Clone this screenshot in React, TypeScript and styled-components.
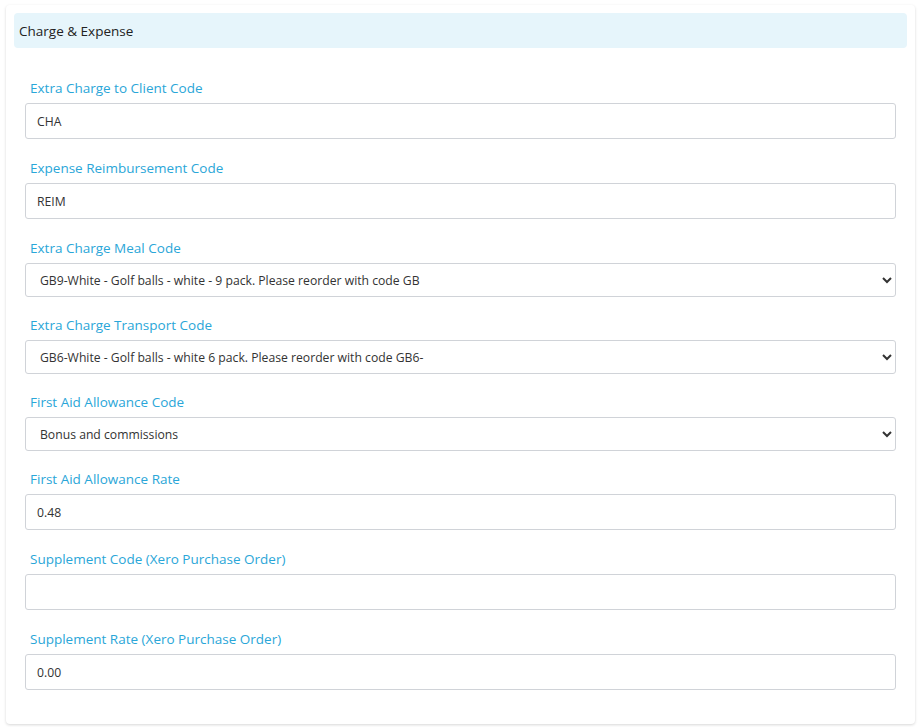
import React from "react";
import styled, {createGlobalStyle} from "styled-components";

const GlobalStyle = createGlobalStyle`
  html, body {
    margin: 0;
    padding: 0;
    background: #fff;
    font-family: "Open Sans", "Noto Sans", sans-serif;
  }
`;

const Page = styled.div`
  padding: 5px 6px 3px 6px;
`;

const Card = styled.section`
  background: #fff;
  border-radius: 4px;
  box-shadow: 0 1px 3px rgba(0, 0, 0, 0.16);
  padding: 8px 8px 34px 8px;
`;

const Header = styled.div`
  background: #e6f5fb;
  border-radius: 4px;
  height: 35px;
  display: flex;
  align-items: center;
  padding: 0 5px;
  font-size: 13.5px;
  color: #222;
`;

const Body = styled.div`
  padding: 30px 11px 0 11px;
  display: flex;
  flex-direction: column;
`;

const Group = styled.div<{$select?: boolean}>`
  display: flex;
  flex-direction: column;
  margin-bottom: ${(p) => (p.$select ? "18px" : "19px")};

  &:last-child {
    margin-bottom: 0;
  }
`;

const Label = styled.label`
  color: #2aa6d8;
  font-size: 13.5px;
  line-height: 21px;
  padding-left: 5px;
  margin-bottom: 4px;
`;

const Input = styled.input`
  box-sizing: border-box;
  height: 36px;
  width: 100%;
  border: 1px solid #d0d3d8;
  border-radius: 3px;
  padding: 0 11px;
  font-family: "Open Sans", "Noto Sans", sans-serif;
  font-size: 12.2px;
  color: #333;
  background: #fff;
  outline: none;
`;

const Select = styled.select`
  box-sizing: border-box;
  height: 34px;
  width: 100%;
  border: 1px solid #d0d3d8;
  border-radius: 3px;
  padding: 0 10px;
  font-family: "Open Sans", "Noto Sans", sans-serif;
  font-size: 12.2px;
  color: #333;
  background: #fff;
  outline: none;
`;

type Field = {
  label: string;
  value: string;
  kind: "input" | "select";
};

const fields: Field[] = [
  {label: "Extra Charge to Client Code", value: "CHA", kind: "input"},
  {label: "Expense Reimbursement Code", value: "REIM", kind: "input"},
  {
    label: "Extra Charge Meal Code",
    value: "GB9-White - Golf balls - white - 9 pack. Please reorder with code GB",
    kind: "select",
  },
  {
    label: "Extra Charge Transport Code",
    value: "GB6-White - Golf balls - white 6 pack. Please reorder with code GB6-",
    kind: "select",
  },
  {label: "First Aid Allowance Code", value: "Bonus and commissions", kind: "select"},
  {label: "First Aid Allowance Rate", value: "0.48", kind: "input"},
  {label: "Supplement Code (Xero Purchase Order)", value: "", kind: "input"},
  {label: "Supplement Rate (Xero Purchase Order)", value: "0.00", kind: "input"},
];

export default function App() {
  return (
    <Page>
      <GlobalStyle />
      <Card>
        <Header>Charge &amp; Expense</Header>
        <Body>
          {fields.map((f) => (
            <Group key={f.label} $select={f.kind === "select"}>
              <Label>{f.label}</Label>
              {f.kind === "input" ? (
                <Input defaultValue={f.value} />
              ) : (
                <Select defaultValue={f.value}>
                  <option value={f.value}>{f.value}</option>
                </Select>
              )}
            </Group>
          ))}
        </Body>
      </Card>
    </Page>
  );
}
